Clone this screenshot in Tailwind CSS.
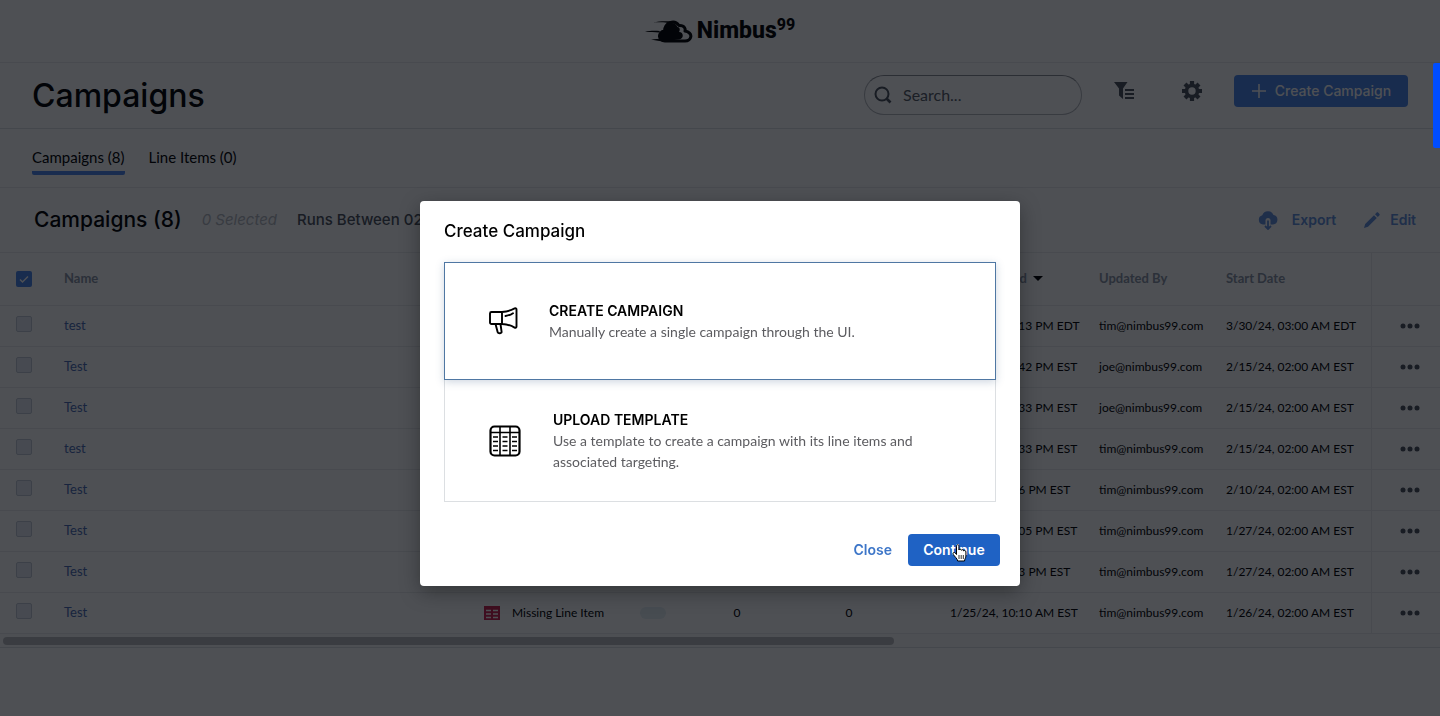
<!DOCTYPE html>
<html lang="en">
<head>
<meta charset="utf-8">
<title>Campaigns - Nimbus99</title>
<script src="https://cdn.jsdelivr.net/npm/@tailwindcss/browser@4"></script>
</head>
<body class="min-h-screen overflow-hidden bg-white font-[Inter,sans-serif] text-black">

<div>
  <header class="flex h-[63px] items-center justify-center border-b border-[#ebecee]">
    <a href="#" class="flex items-center gap-1" aria-label="Nimbus99 home">
      <svg class="h-7 w-12" viewBox="0 0 48 28" fill="none">
        <path d="M8 5.500c6-1.500 11-1.400 18-1.200l-3 1.600C17 5.200 13 5.200 8 5.500ZM0 15c5-1.400 9-1.200 15-1l-1 1.600C10 15.200 5 15 0 15ZM6 22.500c4-.6 7-.8 12 .2l6 2.300C17 24.500 11 23.400 6 22.500Z" fill="#000"/>
        <path d="M20 24c-7 0-7.500-9-.5-10 .5-8 9.500-12.500 14.500-5.500 6-.5 6.500 4 6 5.500 9 2 6.500 10 0 10Z" fill="#fff" stroke="#000" stroke-width="3" stroke-linejoin="round"/>
        <path d="M19 24c-7-1-6.500-10 1-10C20.500 5 30 3.500 32.500 10c3 .3 2.500 4 1.500 5 5 0 5 7 0 7.500Z" fill="#000"/>
      </svg>
      <span class="flex items-start font-[Roboto,sans-serif] font-extrabold"><span class="text-[23px] leading-8">Nimbus</span><span class="text-base leading-5">99</span></span>
    </a>
  </header>

  <div class="flex h-[66px] items-start border-b border-[#dddfe3] pr-8 pl-8 pt-3">
    <h1 class="flex-1 text-[32px] leading-[42px] font-medium">Campaigns</h1>
    <label class="flex h-10 w-[218px] items-center gap-2.5 rounded-full border border-[#b4b7bc] border-t-[#8a8d93] pl-2">
      <svg class="size-5 shrink-0" viewBox="0 0 20 20" fill="none" stroke="#4b515c" stroke-width="2"><circle cx="9" cy="9" r="6.500"/><path d="m13.500 13.500 4 4" stroke-width="2.600"/></svg>
      <input type="text" aria-label="Search" placeholder="Search..." class="w-full min-w-0 bg-transparent font-[Lato,sans-serif] text-base outline-none placeholder:text-[#555b66]">
    </label>
    <button type="button" aria-label="Filter" class="ml-8 flex size-8 items-center">
      <svg class="size-5" viewBox="0 0 20 20" fill="#4b515c"><path d="M0 1h13.500L9 7.500V18l-4-3.500V7.500ZM11 8h9v2h-9ZM11 12h9v2h-9ZM11 16h9v2h-9Z"/></svg>
    </button>
    <button type="button" aria-label="Settings" class="ml-9 flex size-8 items-center">
      <svg class="size-5" viewBox="0 0 20 20" fill="none"><g stroke="#4b515c" stroke-width="4.200"><path d="M10 0v20M0 10h20M3 3l14 14M17 3 3 17"/></g><circle cx="10" cy="10" r="5.500" fill="#fff" stroke="#4b515c" stroke-width="3.600"/></svg>
    </button>
    <button type="button" class="ml-5 flex h-8 w-[174px] items-center justify-center gap-2 rounded-sm bg-[#4a86ea] text-sm font-medium text-white">
      <svg class="size-4" viewBox="0 0 16 16" stroke="#fff" stroke-width="1.600"><path d="M8 1v14M1 8h14"/></svg>
      Create Campaign
    </button>
  </div>

  <nav class="flex h-[59px] gap-6 border-b border-[#ebecee] px-8 pt-4 font-[Lato,sans-serif] text-[15px]">
    <a href="#" class="h-[30px] rounded-b-xs border-b-4 border-[#4f88ee] leading-6">Campaigns (8)</a>
    <a href="#" class="h-[30px] leading-6">Line Items (0)</a>
  </nav>

  <div class="flex h-16 items-center pr-6 pl-[34px]">
    <h2 class="text-[21px] font-medium">Campaigns (8)</h2>
    <p class="ml-5 text-[15px] text-[#b4b8c0] italic">0 Selected</p>
    <p class="ml-5 flex-1 text-[15px] font-medium text-[#4b515c]">Runs Between 02/01/24 - 04/30/24</p>
    <button type="button" class="flex items-center gap-3.5 text-sm font-semibold text-[#628fdc]">
      <svg class="h-5 w-5" viewBox="0 0 20 20" fill="#628fdc"><path d="M5 14.500a4.700 4.700 0 0 1-.7-9.200A6 6 0 0 1 15.500 5 4.800 4.800 0 0 1 15 14.500Z"/><path d="M7.500 15v-4.500a2.500 2.500 0 0 1 5 0V15Z" fill="#fff"/><path d="M10 10.500V19M7 16l3 3 3-3" fill="none" stroke="#628fdc" stroke-width="1.800"/></svg>
      Export
    </button>
    <button type="button" class="ml-7 flex items-center gap-2.5 text-sm font-semibold text-[#628fdc]">
      <svg class="size-4" viewBox="0 0 16 16" fill="#628fdc"><path d="m0 16 1.200-4L10 3.200 12.800 6 4 14.800ZM11 2.200l1.500-1.500c.6-.6 1.200-.6 1.800 0l1 1c.6.6.6 1.200 0 1.800L13.800 5Z"/></svg>
      Edit
    </button>
  </div>

  <table class="w-full table-fixed border-collapse text-left font-[Lato,sans-serif] text-xs whitespace-nowrap">
    <colgroup>
      <col class="w-16"><col><col class="w-[156px]"><col class="w-[55px]"><col class="w-[84px]"><col class="w-[140px]"><col class="w-[180px]"><col class="w-[127px]"><col class="w-[145px]"><col class="w-[69px]">
    </colgroup>
    <thead>
      <tr class="h-[53px] border-y border-[#ebecee] text-[13px] text-[#8b95a6] [&>th]:font-bold">
        <th class="pl-4"><span class="relative block size-4"><input type="checkbox" checked aria-label="Select all" class="block size-4 appearance-none rounded-xs bg-[#4a86ea]"><svg class="pointer-events-none absolute inset-0 size-4" viewBox="0 0 16 16" fill="none" stroke="#fff" stroke-width="1.500"><path d="m4 8.500 2.500 2.500L12 5.500"/></svg></span></th>
        <th>Name</th><th></th><th></th><th></th><th></th>
        <th class="pl-[31px]"><span class="flex items-center gap-1.5">Last Updated <svg class="h-[5px] w-2.5" viewBox="0 0 10 5"><path d="M0 0h10L5 5Z"/></svg></span></th>
        <th>Updated By</th><th>Start Date</th><th class="border-l border-[#ebecee]"></th>
      </tr>
    </thead>
    <tbody id="rows"></tbody>
  </table>

  <div class="h-3.5 border-b border-[#dddfe3] bg-[#fafafb] pt-[3px] pl-[3px]"><div class="h-2 w-[62%] rounded-full bg-[#bcbdc0]"></div></div>
</div>

<template id="row">
  <tr class="h-[41px] border-b border-[#ebecee]">
    <td class="pb-1 pl-4"><input type="checkbox" aria-label="Select campaign" class="block size-4 appearance-none rounded-xs border border-[#c3c9d6] bg-[#e6eaf3]"></td>
    <td><a href="#" data-f="name" class="text-[13px] text-[#4b6cb4]"></a></td>
    <td><span data-status class="flex items-center gap-3"><svg class="h-3.5 w-4" viewBox="0 0 16 14" fill="none"><path d="M0 0h16v14H0Z" fill="#cc2450"/><path d="M2 4.500h5M9 4.500h5M2 8h5M9 8h5M2 11.500h5M9 11.500h5" stroke="#fff" stroke-width="1.600"/></svg><span>Missing Line Item</span></span></td>
    <td><span data-status class="block h-3 w-[26px] rounded-full bg-[#e6f1f6]"></span></td>
    <td data-f="items" class="text-center"></td>
    <td data-f="targets" class="text-center"></td>
    <td data-f="updated" class="pl-[31px]"></td>
    <td data-f="by"></td>
    <td data-f="start"></td>
    <td class="border-l border-[#ebecee]"><button type="button" aria-label="Row actions" class="ml-[26px] block"><svg class="h-2 w-6" viewBox="0 0 24 8" fill="#4b515c"><circle cx="5" cy="4" r="2.500"/><circle cx="12" cy="4" r="2.500"/><circle cx="19" cy="4" r="2.500"/></svg></button></td>
  </tr>
</template>
<script>
  const campaigns = [
    ["test", "3/29/24, 02:13 PM EDT", "tim", "3/30/24, 03:00 AM EDT"],
    ["Test", "2/14/24, 04:42 PM EST", "joe", "2/15/24, 02:00 AM EST"],
    ["Test", "2/14/24, 04:33 PM EST", "joe", "2/15/24, 02:00 AM EST"],
    ["test", "2/14/24, 03:33 PM EST", "tim", "2/15/24, 02:00 AM EST"],
    ["Test", "2/9/24, 03:16 PM EST", "tim", "2/10/24, 02:00 AM EST"],
    ["Test", "1/26/24, 04:05 PM EST", "tim", "1/27/24, 02:00 AM EST"],
    ["Test", "1/26/24, 1:13 PM EST", "tim", "1/27/24, 02:00 AM EST"],
    ["Test", "1/25/24, 10:10 AM EST", "tim", "1/26/24, 02:00 AM EST", 0, 0],
  ];
  for (const [name, updated, by, start, items, targets] of campaigns) {
    const tr = document.getElementById("row").content.cloneNode(true);
    const values = { name, updated, by: by + "@nimbus99.com", start, items, targets };
    for (const el of tr.querySelectorAll("[data-f]")) el.textContent = values[el.dataset.f] ?? "";
    if (items === undefined) for (const el of tr.querySelectorAll("[data-status]")) el.remove();
    document.getElementById("rows").append(tr);
  }
</script>

<div class="fixed inset-0 flex items-start justify-center bg-[#03050c]/70 pt-[201px]">
  <div role="dialog" aria-modal="true" aria-labelledby="dlg" class="w-full max-w-[600px] rounded-sm bg-white px-6 pb-5 shadow-[0_6px_20px_rgba(0,0,0,0.35)]">
    <h2 id="dlg" class="pt-[18px] pb-[19px] text-[17px] leading-6 font-medium">Create Campaign</h2>
    <button type="button" class="relative flex h-[118px] w-full items-center gap-7 border border-[#4f77a3] pl-11 text-left shadow-[0_2px_8px_rgba(60,90,130,0.25)]">
      <svg class="size-8 shrink-0" viewBox="0 0 32 32" fill="none" stroke="#000" stroke-width="1.900" stroke-linecap="round" stroke-linejoin="round"><path d="M2.500 7H13v12H2.500a1.500 1.500 0 0 1-1.500-1.500v-9A1.500 1.500 0 0 1 2.500 7ZM13 7c5-.4 9-1.500 12.600-3.600.8-.5 1.900 0 1.900 1v17.200c0 1-1 1.400-1.900 1C22 20.300 18 19.200 13 19M6.500 19l2.200 8.200c.4 1.400 4.100 1.400 3.900-.4L11.500 19M16.500 11c3.200-.5 5.500-1.300 7.500-2.700"/></svg>
      <span class="font-[Lato,sans-serif] text-sm leading-[21px]"><span class="block font-[Inter,sans-serif] font-semibold">CREATE CAMPAIGN</span><span class="block text-[#5c5c60]">Manually create a single campaign through the UI.</span></span>
    </button>
    <button type="button" class="flex h-[122px] w-full items-center gap-8 border border-t-0 border-[#dcdfe2] pr-12 pl-11 text-left">
      <svg class="size-8 shrink-0" viewBox="0 0 32 32" fill="none" stroke="#000"><rect x="1.500" y="1.500" width="29" height="29" rx="4" stroke-width="2.200"/><path d="M1.500 7.500h29M11 2v28M21 2v28" stroke-width="1.600"/><path d="M4 12h5M13.500 12h5M23 12h5M4 16.500h5M13.500 16.500h5M23 16.500h5M4 21h5M13.500 21h5M23 21h5M4 25.500h5M13.500 25.500h5M23 25.500h5" stroke-width="1.500"/></svg>
      <span class="font-[Lato,sans-serif] text-sm leading-[21px]"><span class="block font-[Inter,sans-serif] font-semibold">UPLOAD TEMPLATE</span><span class="block text-[#5c5c60]">Use a template to create a campaign with its line items and associated targeting.</span></span>
    </button>
    <div class="-mr-1 flex items-center justify-end gap-4 pt-8 text-sm font-semibold">
      <button type="button" class="text-[#3d76c8]">Close</button>
      <button type="button" class="relative h-8 w-[92px] rounded-sm bg-[#1f62c4] text-white">Continue
        <svg class="absolute top-2.5 left-11 h-[18px] w-[15px]" viewBox="0 0 15 18" fill="#fff" stroke="#000" stroke-linejoin="round"><path d="M4.500 10.500V2.200c0-2 2.400-2 2.400 0V6c.3-1.200 2.200-1.100 2.400.3.500-1 2.200-.8 2.300.6.700-.8 2.300-.4 2.300 1V12c0 1.800-1.200 2.700-1.400 5H5.700C5.300 14.500 2.500 12.500 1.200 10.300.300 8.500 2.300 7.900 3.300 9Z"/><path d="M7 11v4M9.200 11v4M11.300 11v4" fill="none" stroke-width=".8"/></svg>
      </button>
    </div>
  </div>
</div>

<aside class="fixed top-[63px] right-0 h-[85px] w-[7px] rounded-l-xs bg-[#004dff]"></aside>
</body>
</html>
